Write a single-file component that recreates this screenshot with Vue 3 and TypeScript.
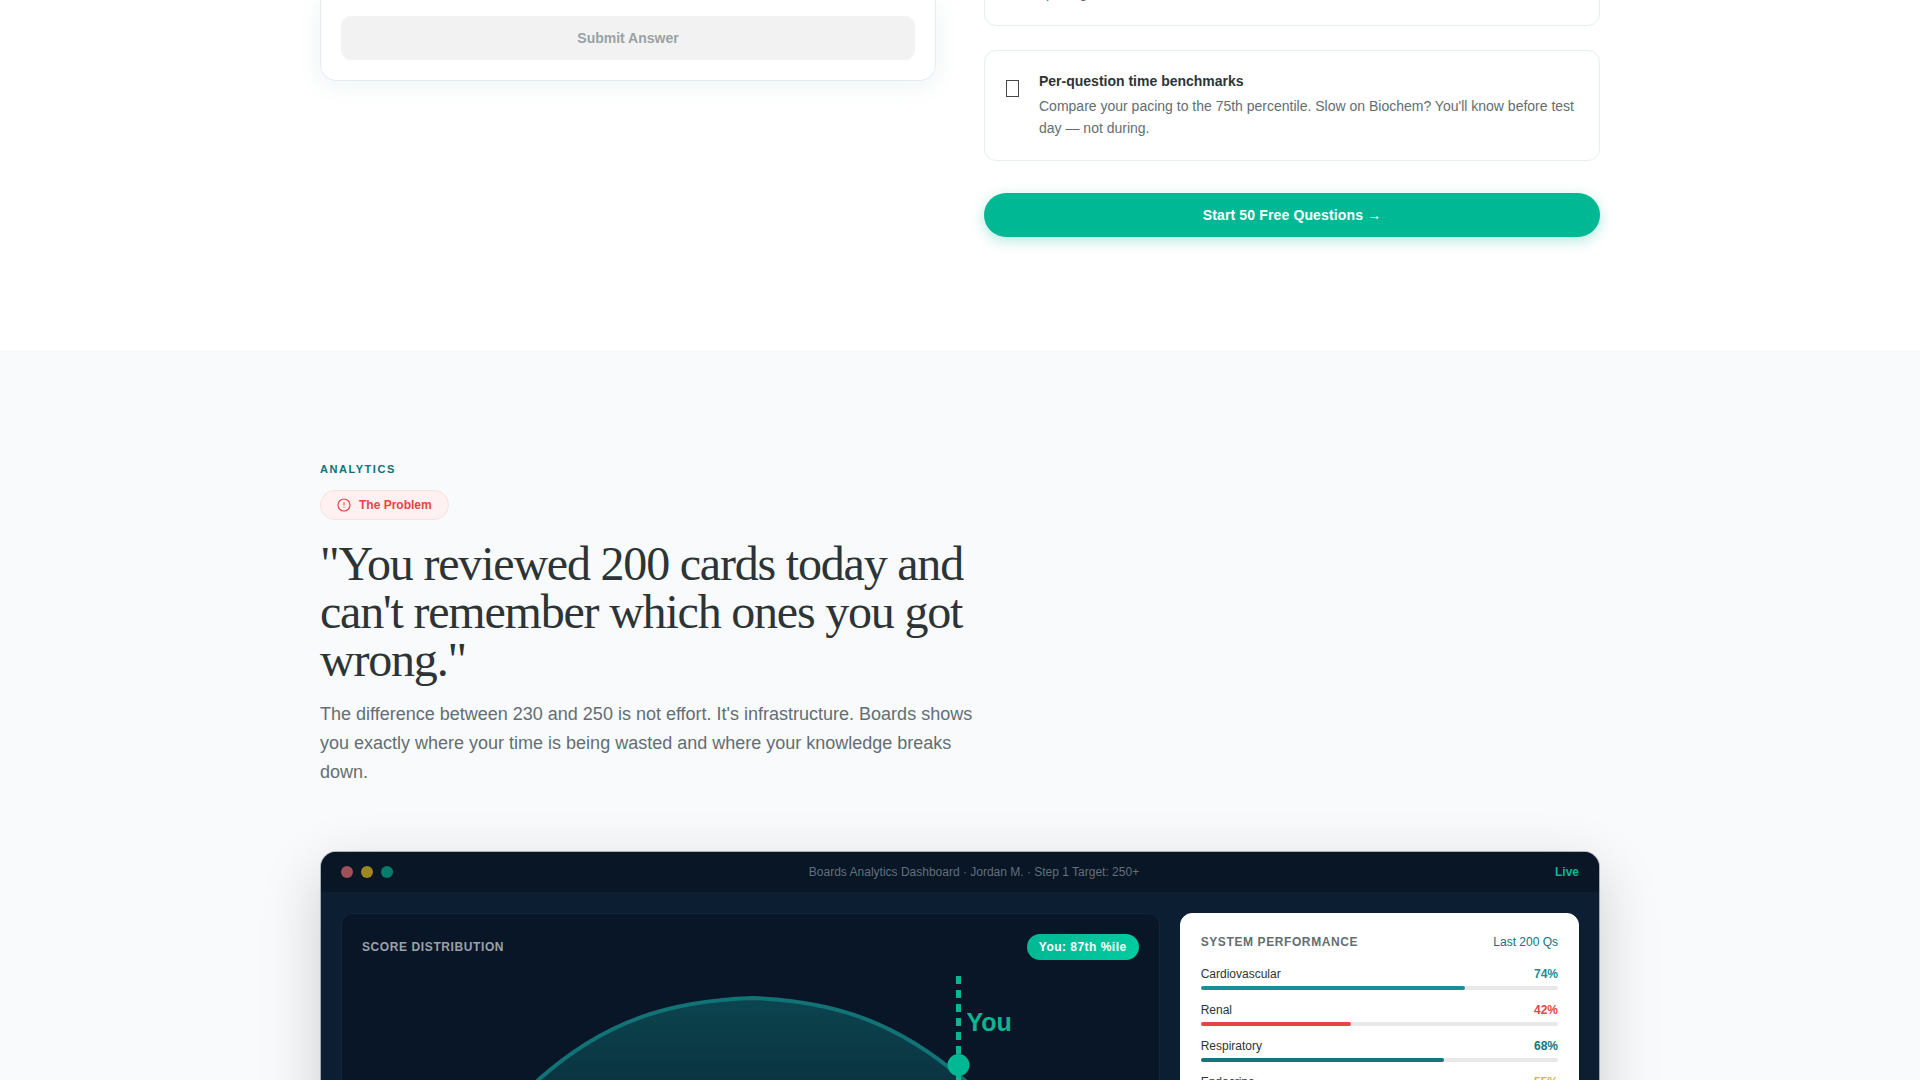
<script setup lang="ts">
interface SystemScore {
  name: string
  score: number
  color: string
}

const systems: SystemScore[] = [
  { name: 'Cardiovascular', score: 74, color: '#1a8f96' },
  { name: 'Renal', score: 42, color: '#e84545' },
  { name: 'Respiratory', score: 68, color: '#15757a' },
  { name: 'Endocrine', score: 55, color: '#f0a830' },
]
</script>

<template>
  <main class="page">
    <section class="practice">
      <div class="container split">
        <form class="question-card" @submit.prevent>
          <button class="submit" type="submit" disabled>Submit Answer</button>
        </form>
        <div class="features">
          <article class="feature feature-first">
            <p>spacing.</p>
          </article>
          <article class="feature">
            <svg class="feature-icon" width="18" height="36" viewBox="0 0 18 36" fill="none" aria-hidden="true">
              <rect x="1.5" y="9.5" width="12" height="16" stroke="#4a4846" />
            </svg>
            <div>
              <h3>Per-question time benchmarks</h3>
              <p>Compare your pacing to the 75th percentile. Slow on Biochem? You'll know before test day — not during.</p>
            </div>
          </article>
          <a class="cta" href="#start">Start 50 Free Questions →</a>
        </div>
      </div>
    </section>

    <section class="analytics">
      <div class="container">
        <header class="intro">
          <p class="eyebrow">ANALYTICS</p>
          <span class="problem">
            <svg width="14" height="14" viewBox="0 0 14 14" fill="none" stroke="currentColor" aria-hidden="true">
              <circle cx="7" cy="7" r="6" stroke-width="1.2" />
              <path d="M7 4.2v3.3M7 8.8v1" stroke-width="1" />
            </svg>
            The Problem
          </span>
          <h2>"You reviewed 200 cards today and can't remember which ones you got wrong."</h2>
          <p class="lead">The difference between 230 and 250 is not effort. It's infrastructure. Boards shows you exactly where your time is being wasted and where your knowledge breaks down.</p>
        </header>

        <div class="dashboard">
          <div class="titlebar">
            <div class="dots"><i class="red"></i><i class="yellow"></i><i class="green"></i></div>
            <span class="window-title">Boards Analytics Dashboard · Jordan M. · Step 1 Target: 250+</span>
            <span class="live">Live</span>
          </div>
          <div class="panels">
            <section class="panel distribution">
              <div class="panel-head">
                <h3>SCORE DISTRIBUTION</h3>
                <span class="rank">You: 87th %ile</span>
              </div>
              <svg class="curve" viewBox="0 0 776 232" role="img" aria-label="Score distribution">
                <defs>
                  <linearGradient id="bell" x1="0" y1="0" x2="0" y2="1">
                    <stop offset="0" stop-color="#0d7377" stop-opacity="0.5" />
                    <stop offset="1" stop-color="#0d7377" stop-opacity="0.05" />
                  </linearGradient>
                </defs>
                <path
                  d="M0 230C90 215 120 160 176 104C242 45 306 25 390 22C474 25 536 47 602 104C656 160 686 215 776 230Z"
                  fill="url(#bell)"
                />
                <path
                  d="M0 230C90 215 120 160 176 104C242 45 306 25 390 22C474 25 536 47 602 104C656 160 686 215 776 230"
                  fill="none"
                  stroke="#117375"
                  stroke-width="4"
                />
                <path d="M596 0V232" stroke="#0bb592" stroke-width="5" stroke-dasharray="8 6" />
                <circle cx="596" cy="89" r="11" fill="#00b894" />
                <text x="604" y="55">You</text>
              </svg>
            </section>
            <section class="panel performance">
              <div class="panel-head">
                <h3>SYSTEM PERFORMANCE</h3>
                <span>Last 200 Qs</span>
              </div>
              <ul>
                <li v-for="s in systems" :key="s.name">
                  <div class="score-row">
                    <span>{{ s.name }}</span>
                    <strong :style="{ color: s.color }">{{ s.score }}%</strong>
                  </div>
                  <div class="track">
                    <div class="fill" :style="{ width: s.score + '%', background: s.color }"></div>
                  </div>
                </li>
              </ul>
            </section>
          </div>
        </div>
      </div>
    </section>
  </main>
</template>

<style>
body {
  margin: 0;
}
</style>

<style scoped>
.page {
  height: 100vh;
  overflow: hidden;
  background: #fff;
  color: #2d3436;
  font-family: "Liberation Sans", Arial, sans-serif;
}
.page * {
  box-sizing: border-box;
}
h2,
h3,
p,
ul {
  margin: 0;
  padding: 0;
}
.container {
  max-width: 1280px;
  margin: 0 auto;
}
.practice {
  padding-bottom: 113px;
}
.split {
  display: grid;
  grid-template-columns: 1fr 1fr;
  gap: 48px;
  align-items: start;
}
.question-card {
  padding: 16px 20px 20px;
  border: 1px solid #e4ecec;
  border-top: 0;
  border-radius: 0 0 16px 16px;
  box-shadow: 0 4px 24px rgba(13, 115, 119, 0.08);
}
.submit {
  display: block;
  width: 100%;
  height: 44px;
  border: 0;
  border-radius: 10px;
  background: #f2f2f2;
  color: #98a2a4;
  font: bold 14px "Liberation Sans", Arial, sans-serif;
}
.features {
  display: flex;
  flex-direction: column;
}
.feature {
  display: flex;
  gap: 16px;
  margin-bottom: 24px;
  padding: 20px 20px 21px;
  border: 1px solid #e6eeee;
  border-radius: 12px;
}
.feature-first {
  margin-top: -39px;
  padding-left: 54px;
}
.feature + .feature {
  margin-bottom: 32px;
}
.feature-icon {
  flex: none;
}
.feature h3 {
  margin-bottom: 4px;
  font-size: 14px;
  line-height: 20px;
}
.feature p {
  color: #636e72;
  font-size: 14px;
  line-height: 22px;
}
.cta {
  display: block;
  border-radius: 22px;
  background: #00b894;
  box-shadow: 0 4px 14px rgba(0, 184, 148, 0.3);
  color: #fff;
  font-size: 14px;
  font-weight: bold;
  letter-spacing: 0.01em;
  line-height: 44px;
  text-align: center;
  text-decoration: none;
}
.analytics {
  padding: 112px 0;
  background: #f8fafc;
}
.intro {
  max-width: 672px;
  margin-bottom: 64px;
}
.eyebrow {
  margin-bottom: 14px;
  color: #0d7377;
  font-size: 11px;
  font-weight: bold;
  letter-spacing: 0.14em;
  line-height: 14px;
}
.problem {
  display: flex;
  align-items: center;
  gap: 8px;
  width: fit-content;
  height: 30px;
  margin-bottom: 20px;
  padding: 0 16px;
  border: 1px solid #fbdfe1;
  border-radius: 15px;
  background: #fff0f1;
  color: #e84545;
  font-size: 12px;
  font-weight: bold;
}
.intro h2 {
  margin-bottom: 16px;
  font-family: "Liberation Serif", "Times New Roman", serif;
  font-size: 48px;
  font-weight: normal;
  letter-spacing: -0.025em;
  line-height: 48px;
}
.lead {
  color: #636e72;
  font-size: 18px;
  line-height: 29px;
}
.dashboard {
  overflow: hidden;
  border: 1px solid rgba(13, 31, 51, 0.3);
  border-radius: 16px;
  background: #0c1e32;
  background-clip: padding-box;
  box-shadow: 0 20px 60px rgba(0, 0, 0, 0.18);
}
.titlebar {
  display: flex;
  align-items: center;
  justify-content: space-between;
  height: 41px;
  padding: 0 20px;
  border-bottom: 1px solid #0d1e31;
  background: #081626;
  font-size: 12px;
}
.dots {
  display: flex;
  gap: 8px;
}
.dots i {
  width: 12px;
  height: 12px;
  border-radius: 50%;
}
.red {
  background: #a05058;
}
.yellow {
  background: #a08620;
}
.green {
  background: #047d6e;
}
.window-title {
  color: #646f7b;
}
.live {
  color: #00b894;
  font-weight: bold;
}
.panels {
  display: grid;
  grid-template-columns: repeat(12, 1fr);
  gap: 20px;
  padding: 20px;
}
.panel {
  padding: 20px;
  border: 1px solid #12253a;
  border-radius: 12px;
}
.distribution {
  grid-column: span 8;
  background: #091627;
}
.performance {
  grid-column: span 4;
  border-color: #fff;
  background: #fff;
}
.panel-head {
  display: flex;
  align-items: center;
  justify-content: space-between;
  margin-bottom: 16px;
  font-size: 12px;
  line-height: 16px;
}
.panel-head h3 {
  font-size: 12px;
  letter-spacing: 0.05em;
}
.distribution h3 {
  color: #9ca1a8;
}
.performance h3 {
  color: #636e72;
}
.performance .panel-head span {
  color: #0d7377;
}
.rank {
  padding: 5px 12px;
  border-radius: 13px;
  background: linear-gradient(90deg, #00b894, #00cba0);
  color: #fff;
  font-weight: bold;
  letter-spacing: 0.04em;
}
.curve {
  display: block;
  width: 100%;
}
.curve text {
  fill: #0bb592;
  font-size: 25px;
  font-weight: bold;
}
.performance ul {
  display: grid;
  gap: 12px;
  list-style: none;
}
.score-row {
  display: flex;
  justify-content: space-between;
  margin-bottom: 4px;
  font-size: 12px;
  line-height: 16px;
}
.track {
  height: 4px;
  border-radius: 2px;
  background: #e8e8e8;
}
.fill {
  height: 4px;
  border-radius: 2px;
}
</style>
